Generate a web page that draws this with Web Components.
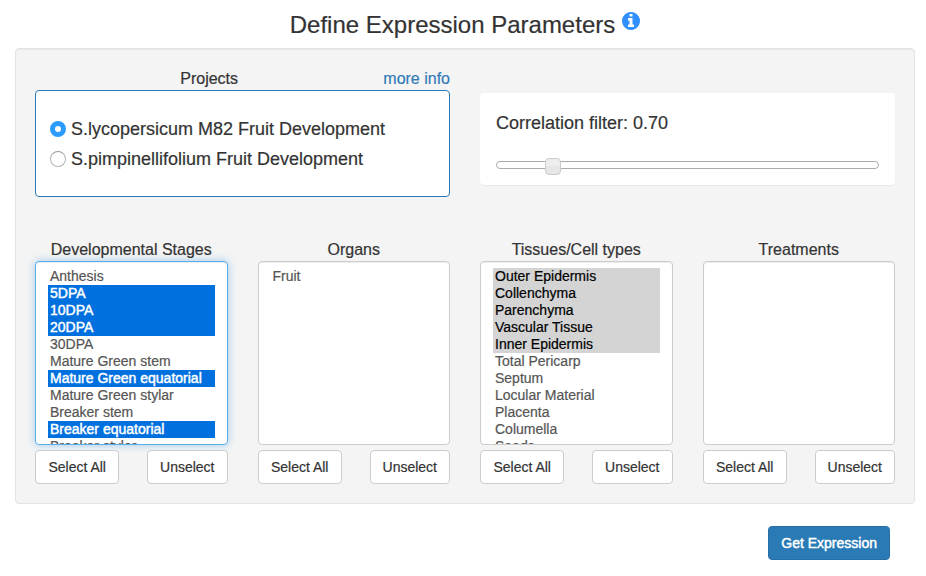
<!DOCTYPE html>
<html lang="en">
<head>
<meta charset="utf-8">
<title>Define Expression Parameters</title>
<style>
html, body { margin: 0; }
body { height: 576px; overflow: hidden; background: #fff; color: #333; font-family: "Liberation Sans", Arial, sans-serif; -webkit-text-stroke: .2px currentColor; }
</style>
</head>
<body>
<expression-page></expression-page>
<script>
const define = (name, html, setup) => customElements.define(name, class extends HTMLElement {
  constructor() {
    super();
    const t = document.createElement('template');
    t.innerHTML = '<style>*{box-sizing:border-box}:host{box-sizing:border-box}</style>' + html;
    this.attachShadow({ mode: 'open' }).append(t.content.cloneNode(true));
  }
  connectedCallback() { if (setup) setup(this, this.shadowRoot); }
});

define('info-icon', `
<style>:host{display:block;width:18px;height:18px;color:#3090ff}svg{display:block;width:18px;height:18px}</style>
<svg viewBox="128 128 1536 1536"><path fill="currentColor" d="M1152 1376v-160q0-14-9-23t-23-9h-96v-512q0-14-9-23t-23-9h-320q-14 0-23 9t-9 23v160q0 14 9 23t23 9h96v320h-96q-14 0-23 9t-9 23v160q0 14 9 23t23 9h448q14 0 23-9t9-23zM1024 480v-160q0-14-9-23t-23-9h-192q-14 0-23 9t-9 23v160q0 14 9 23t23 9h192q14 0 23-9t9-23zM1664 896q0 209-103 385.500t-279.500 279.500-385.500 103-385.500-103-279.500-279.500-103-385.500 103-385.500 279.500-279.500 385.500-103 385.500 103 279.500 279.500 103 385.500z"/></svg>`);

define('ui-button', `
<style>
:host{display:block}
button{display:block;height:34px;padding:0 12px;border:1px solid #ccc;border-radius:4px;background:#fff;color:#333;font:14px/20px "Liberation Sans",Arial,sans-serif;white-space:nowrap}
:host([wide]) button{min-width:84.4px}
:host([primary]) button{background:#2a7ab5;border-color:#266fa5;color:#fff;-webkit-text-stroke:.45px #fff}
</style>
<button type="button"><slot></slot></button>`);

define('radio-option', `
<style>
:host{display:flex;align-items:center;gap:5px;height:30px;font-size:18px;line-height:26px;white-space:nowrap}
i{width:16px;height:16px;border-radius:50%;border:1px solid #b2b2b2;border-top-color:#999;background:#fff}
:host([checked]) i{border:5px solid #2b9bfd}
</style>
<i></i><span><slot></slot></span>`);

define('project-picker', `
<style>
:host{display:block}
header{display:flex;font-size:16px;line-height:22px;height:22px}
header span{flex:1;text-align:center}
a{color:#337ab7;-webkit-text-stroke-color:#337ab7}
.box{height:107px;border:1px solid #2a7ab5;border-radius:4px;background:#fff;padding:23px 14px}
</style>
<header><span>Projects</span><a>more info</a></header>
<div class="box"><slot></slot></div>`);

define('correlation-filter', `
<style>
:host{display:block;height:92px;margin-top:25px;padding:17px 16px 0;background:#fff;border-radius:4px;box-shadow:0 1px 1px rgba(0,0,0,.05)}
p{margin:0;font-size:18px;line-height:26px}
.track{display:flex;align-items:center;margin-top:25px;height:8px;border:1px solid #aaa;border-radius:4px;padding-left:48px}
.thumb{flex:none;width:16px;height:17px;margin-top:3px;border:1px solid #ccc;border-radius:4px;background:linear-gradient(#ededed 50%,#e6e6e6 50%)}
</style>
<p><slot></slot></p><div class="track"><div class="thumb"></div></div>`);

define('list-option', `
<style>
:host{display:block;height:17px;padding-left:2px;font-size:14px;line-height:17px;color:#555;-webkit-text-stroke-color:#555;white-space:nowrap}
:host([selected]){background:#0070df;color:#fff;-webkit-text-stroke:.45px #fff}
:host([inactive]){background:#d4d4d4;color:#000;-webkit-text-stroke-color:#000}
</style><slot></slot>`);

define('multi-select', `
<style>
:host{display:block}
h2{margin:0;font-size:16px;line-height:22px;font-weight:400;text-align:center;white-space:nowrap}
.list{height:184px;padding:6px 12px;border:1px solid #ccc;border-radius:4px;background:#fff;box-shadow:inset 0 1px 1px rgba(0,0,0,.075);overflow:hidden}
:host([focused]) .list{border-color:#5badea;box-shadow:inset 0 1px 1px rgba(0,0,0,.075),0 0 8px rgba(102,175,233,.6)}
footer{display:flex;justify-content:space-between;margin-top:5px}
</style>
<h2></h2><div class="list"><slot></slot></div>
<footer><ui-button wide>Select All</ui-button><ui-button>Unselect</ui-button></footer>`,
(el, root) => { root.querySelector('h2').textContent = el.getAttribute('label'); });

define('expression-page', `
<style>
:host{display:block}
.title{display:flex;justify-content:center;gap:7px;padding:11px 0 0 4px;height:48px}
h1{margin:0;font-size:24px;line-height:27px;font-weight:400;white-space:nowrap}
info-icon{margin-top:1px}
.well{box-sizing:border-box;width:900px;height:456px;margin-left:15px;padding:19px;border:1px solid #e3e3e3;border-radius:4px;background:#f4f4f4;box-shadow:inset 0 1px 1px rgba(0,0,0,.05)}
.top{display:grid;grid-template-columns:415px 415px;gap:30px;height:171px}
.lists{display:grid;grid-template-columns:repeat(4,192.5px);gap:30px}
.actions{display:flex;justify-content:flex-end;padding:22px 36px 0 0}
</style>
<div class="title"><h1>Define Expression Parameters</h1><info-icon></info-icon></div>
<section class="well">
<div class="top">
<project-picker><radio-option checked>S.lycopersicum M82 Fruit Development</radio-option><radio-option>S.pimpinellifolium Fruit Development</radio-option></project-picker>
<correlation-filter>Correlation filter: 0.70</correlation-filter>
</div>
<div class="lists">
<multi-select label="Developmental Stages" focused><list-option>Anthesis</list-option><list-option selected>5DPA</list-option><list-option selected>10DPA</list-option><list-option selected>20DPA</list-option><list-option>30DPA</list-option><list-option>Mature Green stem</list-option><list-option selected>Mature Green equatorial</list-option><list-option>Mature Green stylar</list-option><list-option>Breaker stem</list-option><list-option selected>Breaker equatorial</list-option><list-option>Breaker stylar</list-option></multi-select>
<multi-select label="Organs"><list-option>Fruit</list-option></multi-select>
<multi-select label="Tissues/Cell types"><list-option inactive>Outer Epidermis</list-option><list-option inactive>Collenchyma</list-option><list-option inactive>Parenchyma</list-option><list-option inactive>Vascular Tissue</list-option><list-option inactive>Inner Epidermis</list-option><list-option>Total Pericarp</list-option><list-option>Septum</list-option><list-option>Locular Material</list-option><list-option>Placenta</list-option><list-option>Columella</list-option><list-option>Seeds</list-option></multi-select>
<multi-select label="Treatments"></multi-select>
</div>
</section>
<div class="actions"><ui-button primary>Get Expression</ui-button></div>`);
</script>
</body>
</html>
